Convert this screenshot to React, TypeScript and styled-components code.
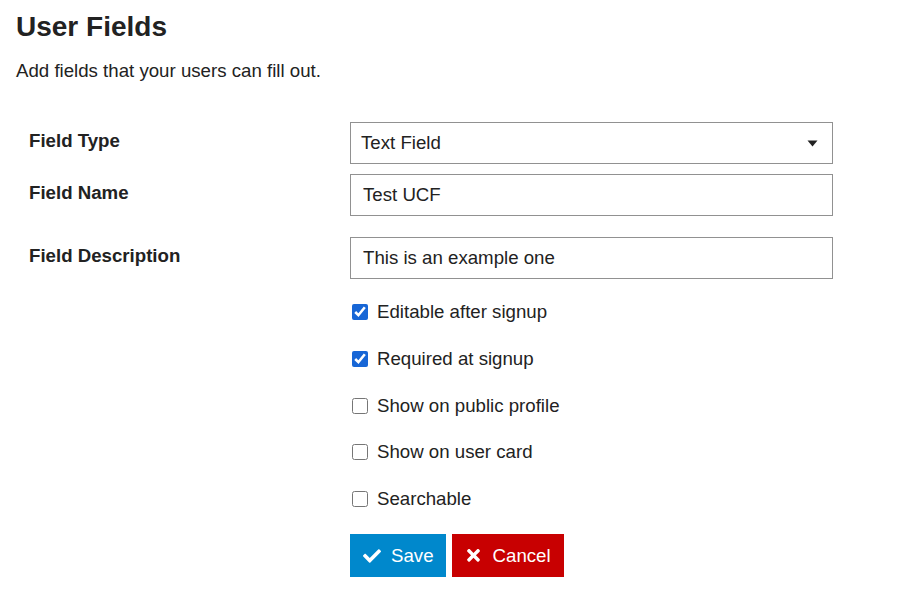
import styled, { createGlobalStyle } from "styled-components";

const GlobalStyle = createGlobalStyle`
  html, body {
    margin: 0;
    padding: 0;
    background: #ffffff;
  }
  body {
    font-family: "Liberation Sans", Arial, sans-serif;
    color: #222222;
  }
`;

const CheckIcon = () => (
  <svg width="18" height="18" viewBox="0 0 512 512" fill="currentColor">
    <path d="M173.9 439.4l-166.4-166.4c-10-10-10-26.2 0-36.2l36.2-36.2c10-10 26.2-10 36.2 0L192 312.7 432.1 72.6c10-10 26.2-10 36.2 0l36.2 36.2c10 10 10 26.2 0 36.2l-294.4 294.4c-10 10-26.2 10-36.2 0z" />
  </svg>
);

const TimesIcon = () => (
  <svg width="13" height="18.67" viewBox="0 0 352 512" fill="currentColor">
    <path d="M242.7 256l100.1-100.1c12.3-12.3 12.3-32.2 0-44.5l-22.2-22.2c-12.3-12.3-32.2-12.3-44.5 0L176 189.3 75.9 89.2c-12.3-12.3-32.2-12.3-44.5 0L9.2 111.5c-12.3 12.3-12.3 32.2 0 44.5L109.3 256 9.2 356.1c-12.3 12.3-12.3 32.2 0 44.5l22.2 22.2c12.3 12.3 32.2 12.3 44.5 0L176 322.7l100.1 100.1c12.3 12.3 32.2 12.3 44.5 0l22.2-22.2c12.3-12.3 12.3-32.2 0-44.5L242.7 256z" />
  </svg>
);

const CaretIcon = () => (
  <svg width="11" height="7" viewBox="0 0 11 7" fill="#222222">
    <path d="M0.5 0.5h10l-5 6z" />
  </svg>
);

const checkboxes = [
  { label: "Editable after signup", checked: true },
  { label: "Required at signup", checked: true },
  { label: "Show on public profile", checked: false },
  { label: "Show on user card", checked: false },
  { label: "Searchable", checked: false },
];

const App = () => {
  return (
    <Page>
      <GlobalStyle />
      <Title>User Fields</Title>
      <Subtitle>Add fields that your users can fill out.</Subtitle>
      <Form>
        <Row gapAfter={10}>
          <Label>Field Type</Label>
          <SelectBox>
            <span>Text Field</span>
            <CaretIcon />
          </SelectBox>
        </Row>
        <Row gapAfter={21}>
          <Label>Field Name</Label>
          <TextInput defaultValue="Test UCF" />
        </Row>
        <Row gapAfter={22}>
          <Label>Field Description</Label>
          <TextInput defaultValue="This is an example one" />
        </Row>
        <Row gapAfter={24}>
          <span />
          <CheckList>
            {checkboxes.map((c) => (
              <CheckRow key={c.label}>
                <CheckBox type="checkbox" defaultChecked={c.checked} />
                {c.label}
              </CheckRow>
            ))}
          </CheckList>
        </Row>
        <Row gapAfter={0}>
          <span />
          <Buttons>
            <Button color="#0088cc">
              <IconSlot>
                <CheckIcon />
              </IconSlot>
              Save
            </Button>
            <Button color="#c80001" wide>
              <IconSlot>
                <TimesIcon />
              </IconSlot>
              Cancel
            </Button>
          </Buttons>
        </Row>
      </Form>
    </Page>
  );
};

const Page = styled.div`
  padding: 11px 16px 0 16px;
`;

const Title = styled.h1`
  margin: 0;
  font-size: 28px;
  line-height: 32px;
  font-weight: 700;
`;

const Subtitle = styled.p`
  margin: 15px 0 0 0;
  font-size: 18.67px;
  line-height: 26px;
`;

const Form = styled.div`
  margin-top: 38px;
  padding-left: 13px;
  display: flex;
  flex-direction: column;
`;

const Row = styled.div<{ gapAfter: number }>`
  display: grid;
  grid-template-columns: 321px 483px;
  align-items: start;
  margin-bottom: ${({ gapAfter }) => gapAfter}px;
`;

const Label = styled.label`
  font-size: 18.67px;
  font-weight: 700;
  line-height: 26px;
  padding-top: 6px;
`;

const SelectBox = styled.div`
  box-sizing: border-box;
  height: 42px;
  border: 1px solid #919191;
  padding: 0 14px 0 10px;
  display: flex;
  align-items: center;
  justify-content: space-between;
  font-size: 18.67px;
  background: #ffffff;
`;

const TextInput = styled.input`
  box-sizing: border-box;
  width: 100%;
  height: 42px;
  margin: 0;
  border: 1px solid #919191;
  border-radius: 0;
  padding: 0 12px;
  font-family: "Liberation Sans", Arial, sans-serif;
  font-size: 18.67px;
  color: #222222;
  outline: none;
`;

const CheckList = styled.div`
  display: flex;
  flex-direction: column;
  gap: 24.75px;
`;

const CheckRow = styled.label`
  display: flex;
  align-items: center;
  height: 22px;
  font-size: 18.67px;
`;

const CheckBox = styled.input`
  width: 16px;
  height: 16px;
  margin: 0 9px 0 2px;
  accent-color: #1766d6;
`;

const Buttons = styled.div`
  display: flex;
  gap: 6px;
`;

const Button = styled.button<{ color: string; wide?: boolean }>`
  display: flex;
  align-items: center;
  height: 43px;
  padding: ${({ wide }) => (wide ? "0 13px 0 13px" : "0 12px 0 13px")};
  border: none;
  border-radius: 0;
  background: ${({ color }) => color};
  color: #ffffff;
  font-family: "Liberation Sans", Arial, sans-serif;
  font-size: 18.67px;
  cursor: pointer;
`;

const IconSlot = styled.span`
  display: inline-flex;
  width: 18px;
  justify-content: center;
  margin-right: 10px;
`;

export default App;
